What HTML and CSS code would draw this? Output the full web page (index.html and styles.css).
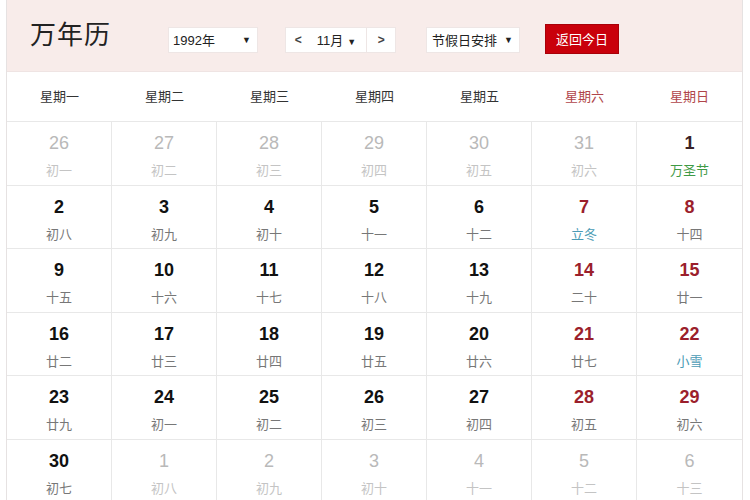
FILE: index.html
```html
<!DOCTYPE html>
<html lang="zh">
<head>
<meta charset="utf-8">
<title>万年历</title>
<link rel="stylesheet" href="styles.css">
</head>
<body>
<div class="cal">
  <div class="head">
    <div class="title">万年历</div>
    <div class="sel year"><span>1992年</span><span class="tri">▼</span></div>
    <div class="mnav">
      <span class="arr">&lt;</span>
      <span class="mon">11月<span class="tri">▼</span></span>
      <span class="arr r">&gt;</span>
    </div>
    <div class="sel hol"><span>节假日安排</span><span class="tri">▼</span></div>
    <div class="today">返回今日</div>
  </div>
  <div class="week">
    <div>星期一</div><div>星期二</div><div>星期三</div><div>星期四</div><div>星期五</div><div class="we">星期六</div><div class="we">星期日</div>
  </div>
  <div class="grid">
    <div class="c off"><b>26</b><i>初一</i></div>
    <div class="c off"><b>27</b><i>初二</i></div>
    <div class="c off"><b>28</b><i>初三</i></div>
    <div class="c off"><b>29</b><i>初四</i></div>
    <div class="c off"><b>30</b><i>初五</i></div>
    <div class="c off"><b>31</b><i>初六</i></div>
    <div class="c"><b class="dk">1</b><i class="fest">万圣节</i></div>

    <div class="c"><b>2</b><i>初八</i></div>
    <div class="c"><b>3</b><i>初九</i></div>
    <div class="c"><b>4</b><i>初十</i></div>
    <div class="c"><b>5</b><i>十一</i></div>
    <div class="c"><b>6</b><i>十二</i></div>
    <div class="c red"><b>7</b><i class="term">立冬</i></div>
    <div class="c red"><b>8</b><i>十四</i></div>

    <div class="c"><b>9</b><i>十五</i></div>
    <div class="c"><b>10</b><i>十六</i></div>
    <div class="c"><b>11</b><i>十七</i></div>
    <div class="c"><b>12</b><i>十八</i></div>
    <div class="c"><b>13</b><i>十九</i></div>
    <div class="c red"><b>14</b><i>二十</i></div>
    <div class="c red"><b>15</b><i>廿一</i></div>

    <div class="c"><b>16</b><i>廿二</i></div>
    <div class="c"><b>17</b><i>廿三</i></div>
    <div class="c"><b>18</b><i>廿四</i></div>
    <div class="c"><b>19</b><i>廿五</i></div>
    <div class="c"><b>20</b><i>廿六</i></div>
    <div class="c red"><b>21</b><i>廿七</i></div>
    <div class="c red"><b>22</b><i class="term">小雪</i></div>

    <div class="c"><b>23</b><i>廿九</i></div>
    <div class="c"><b>24</b><i>初一</i></div>
    <div class="c"><b>25</b><i>初二</i></div>
    <div class="c"><b>26</b><i>初三</i></div>
    <div class="c"><b>27</b><i>初四</i></div>
    <div class="c red"><b>28</b><i>初五</i></div>
    <div class="c red"><b>29</b><i>初六</i></div>

    <div class="c"><b>30</b><i>初七</i></div>
    <div class="c off"><b>1</b><i>初八</i></div>
    <div class="c off"><b>2</b><i>初九</i></div>
    <div class="c off"><b>3</b><i>初十</i></div>
    <div class="c off"><b>4</b><i>十一</i></div>
    <div class="c off"><b>5</b><i>十二</i></div>
    <div class="c off"><b>6</b><i>十三</i></div>
  </div>
</div>
</body>
</html>
```

FILE: styles.css
```css
html, body {
  margin: 0;
  padding: 0;
  background: #fff;
}
body {
  font-family: "Liberation Sans", "Noto Sans CJK SC", sans-serif;
  color: #222;
  overflow: hidden;
}
.cal {
  margin-left: 6px;
  width: 735px;
  border-left: 1px solid #e6e2e2;
  border-right: 1px solid #e6e2e2;
}
.head {
  height: 72px;
  background: #f8ecea;
  display: flex;
  align-items: center;
  border-bottom: 1px solid #efe4e3;
  box-sizing: border-box;
}
.title {
  font-family: "Noto Sans CJK SC", sans-serif;
  font-size: 26px;
  color: #222;
  margin-left: 23px;
  margin-bottom: 6px;
  letter-spacing: 1px;
  width: 138px;
}
.sel, .mnav {
  height: 26px;
  background: #fff;
  border: 1px solid #eee6e5;
  box-sizing: border-box;
  display: flex;
  align-items: center;
  font-size: 13px;
  color: #222;
  margin-top: 8px;
}
.sel {
  justify-content: space-between;
  padding: 0 6px 0 4px;
  font-family: "Liberation Sans", "Noto Sans CJK SC", sans-serif;
}
.year { width: 90px; }
.hol { width: 94px; margin-left: 30px; padding-left: 5px; }
.tri { font-size: 9px; color: #222; }
.mnav {
  width: 111px;
  margin-left: 27px;
}
.mnav .arr {
  width: 25px;
  text-align: center;
  font-size: 12px;
  font-weight: bold;
  color: #444;
}
.mnav .arr.r {
  width: 28px;
  border-left: 1px solid #eee6e5;
  height: 100%;
  line-height: 24px;
}
.mnav .mon {
  width: 56px;
  padding-left: 6px;
  box-sizing: border-box;
}
.mnav .mon .tri { margin-left: 4px; }
.today {
  margin-left: 25px;
  margin-top: 6px;
  width: 74px;
  height: 30px;
  box-sizing: border-box;
  background: #c9000b;
  border: 1px solid #a80008;
  color: #fff;
  font-family: "Noto Sans CJK SC", sans-serif;
  font-size: 13px;
  display: flex;
  align-items: center;
  justify-content: center;
}
.week {
  display: grid;
  grid-template-columns: repeat(7, 1fr);
  height: 50px;
  border-bottom: 1px solid #e8e8e8;
  box-sizing: border-box;
}
.week div {
  text-align: center;
  line-height: 48px;
  font-family: "Noto Sans CJK SC", sans-serif;
  font-size: 13px;
  color: #333;
}
.week .we { color: #b0454a; }
.grid {
  display: grid;
  grid-template-columns: repeat(7, 1fr);
  grid-auto-rows: 63.5px;
}
.c {
  border-right: 1px solid #e8e8e8;
  border-bottom: 1px solid #e8e8e8;
  display: flex;
  flex-direction: column;
  align-items: center;
  padding-top: 10px;
  box-sizing: border-box;
}
.c:nth-child(7n) { border-right: none; }
.c b {
  font-family: "Liberation Sans", Arial, sans-serif;
  font-size: 18px;
  line-height: 22px;
  font-weight: bold;
  color: #111;
}
.c i {
  font-style: normal;
  font-family: "Noto Sans CJK SC", sans-serif;
  font-size: 13px;
  line-height: 18px;
  margin-top: 7px;
  color: #777;
}
.c.red b { color: #9b1f2c; }
.c b.dk { color: #3a2226; }
.c.off b { color: #b9b9b9; font-weight: normal; }
.c.off i { color: #c4c4c4; }
.c i.fest { color: #3f9a45; }
.c i.term { color: #4b9bb5; }
```
